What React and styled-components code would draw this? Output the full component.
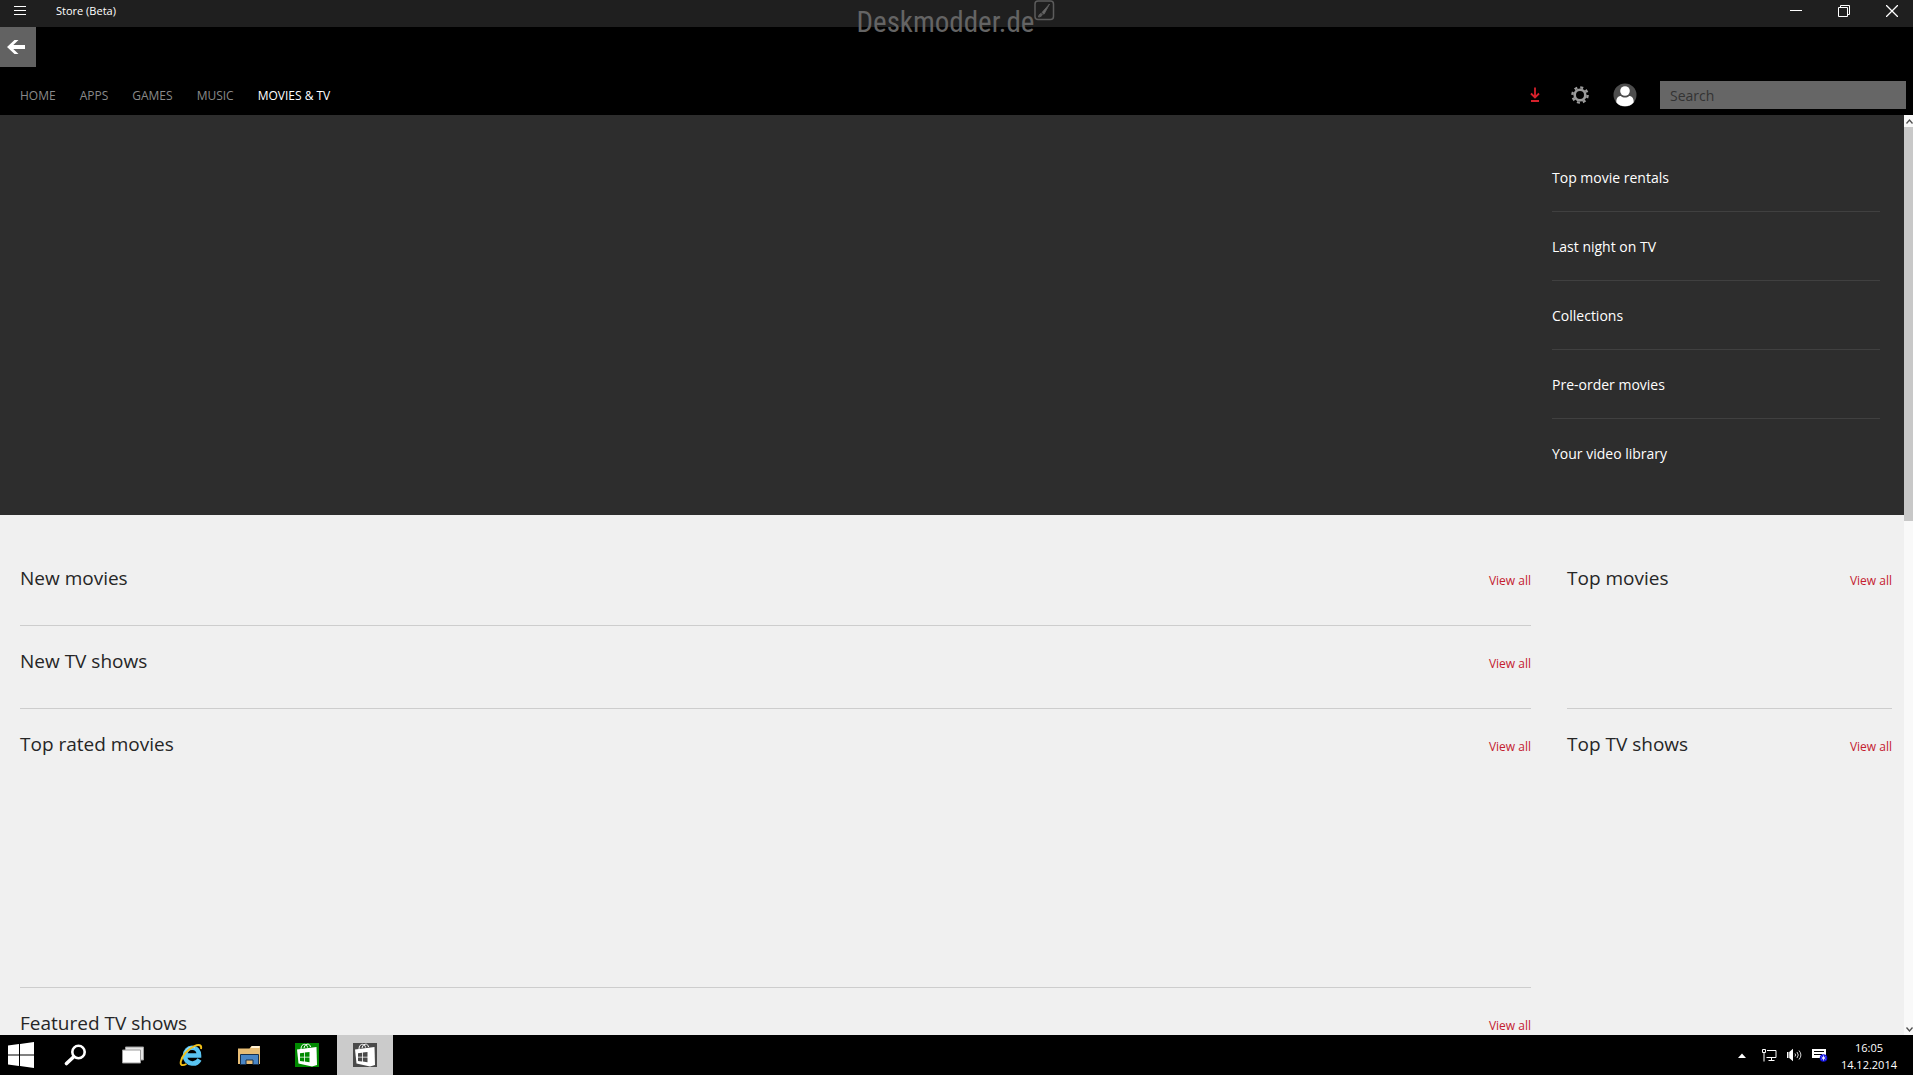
import { useState } from 'react';
import styled, { createGlobalStyle } from 'styled-components';

const tabs = ['HOME', 'APPS', 'GAMES', 'MUSIC', 'MOVIES & TV'];

const links = ['Top movie rentals', 'Last night on TV', 'Collections', 'Pre-order movies', 'Your video library'];

const mainSections = [
  { title: 'New movies', height: 83 },
  { title: 'New TV shows', height: 83 },
  { title: 'Top rated movies', height: 279 },
  { title: 'Featured TV shows', height: 279 },
];

const sideSections = [
  { title: 'Top movies', height: 166 },
  { title: 'Top TV shows', height: 558 },
];

function Section({ title, height }) {
  return (
    <SectionBox $height={height}>
      <h2>{title}</h2>
      <a href="#all">View all</a>
    </SectionBox>
  );
}

function StoreIcon({ color }) {
  return (
    <svg width="24" height="24" viewBox="0 0 24 24">
      <path fill={color} d="M0 0h24v24H0z" />
      <path fill="none" stroke="#fff" d="M6 6C6 0 12 0 12.500 4.500M9 5C10 0 15 0 15.500 4" />
      <path fill="#fff" d="M2 6.500L21.500 4 22 22 17 23.500 3.500 20.500z" />
      <path fill={color} d="M5 10.300l4-.6v4H5zM9.800 9.600l4.700-.7v4.800H9.800zM5 14.500h4v4l-4-.6zM9.800 14.500h4.700v4.800l-4.700-.7z" />
    </svg>
  );
}

export default function App() {
  const [active, setActive] = useState('MOVIES & TV');
  const [query, setQuery] = useState('');

  return (
    <Desktop>
      <GlobalStyle />
      <TitleBar>
        <MenuButton aria-label="Menu">
          <svg width="12" height="10" viewBox="0 0 12 10"><path stroke="#fff" d="M0 .5h12M0 4.500h12M0 8.500h12" /></svg>
        </MenuButton>
        <h1>Store (Beta)</h1>
        <WindowButtons>
          <button aria-label="Minimize">
            <svg width="12" height="12" viewBox="0 0 12 12"><path stroke="#fff" d="M0 5.500h12" /></svg>
          </button>
          <button aria-label="Restore">
            <svg width="12" height="12" viewBox="0 0 12 12"><path fill="none" stroke="#fff" d="M.5 2.500h9v9h-9zM2.500 2.500v-2h9v9h-2" /></svg>
          </button>
          <button aria-label="Close">
            <svg width="12" height="12" viewBox="0 0 12 12"><path stroke="#fff" strokeWidth="1.300" d="M0 0l12 12M12 0L0 12" /></svg>
          </button>
        </WindowButtons>
      </TitleBar>
      <Watermark>
        <span>Deskmodder.de</span>
        <svg width="21" height="21" viewBox="0 0 21 21" fill="none" stroke="#5c5c5c">
          <rect x="1" y="1" width="18.500" height="18.500" rx="3" strokeWidth="1.500" />
          <path fill="#5c5c5c" d="M4.500 17c.3-2 1.200-3.500 2.800-3.500l1 1C8 16 6.500 17 4.500 17z" />
          <path d="M8 12.500L15.500 4 10 14.200z" fill="#6a6a6a" />
        </svg>
      </Watermark>

      <Header>
        <BackButton aria-label="Back">
          <svg width="18" height="16" viewBox="0 0 18 16"><path fill="#fff" d="M0 8L7.500 1h4L6.300 6H18v4H6.300l5.200 5h-4z" /></svg>
        </BackButton>
        <Toolbar>
          <Tabs>
            {tabs.map((tab) => (
              <Tab key={tab} href="#tab" $active={tab === active} onClick={() => setActive(tab)}>{tab}</Tab>
            ))}
          </Tabs>
          <Tools>
            <button aria-label="Downloads">
              <svg width="10" height="16" viewBox="0 0 10 16" fill="none" stroke="#d5212b">
                <path strokeWidth="1.800" d="M5 .5v10M1 6.500l4 4 4-4" />
                <path strokeWidth="2" d="M1 14h8" />
              </svg>
            </button>
            <button aria-label="Settings">
              <svg width="18" height="18" viewBox="0 0 18 18" fill="none" stroke="#9a9a9a">
                <circle cx="9" cy="9" r="5.300" strokeWidth="2.600" />
                <circle cx="9" cy="9" r="7.600" strokeWidth="2.400" strokeDasharray="3 2.969" />
              </svg>
            </button>
            <button aria-label="Account">
              <svg width="24" height="24" viewBox="0 0 24 24">
                <circle cx="12" cy="12" r="11.500" fill="#4d4d4d" />
                <circle cx="12" cy="8" r="4.800" fill="#fff" />
                <path fill="#fff" d="M3.400 19.500C3 15.500 5 13 7.800 13c1.200 1 2.600 1.500 4.200 1.500s3-.5 4.200-1.500c2.800 0 4.800 2.500 4.400 6.500a11.500 11.500 0 0 1-17.200 0z" />
              </svg>
            </button>
          </Tools>
          <Search
            type="text"
            aria-label="Search"
            placeholder="Search"
            value={query}
            onChange={(e) => setQuery(e.target.value)}
          />
        </Toolbar>
      </Header>

      <Viewport>
        <Page>
          <Hero>
            <LinkList>
              {links.map((link) => (
                <li key={link}><a href="#list">{link}</a></li>
              ))}
            </LinkList>
          </Hero>
          <Content>
            <div>
              {mainSections.map((s) => <Section key={s.title} {...s} />)}
            </div>
            <div>
              {sideSections.map((s) => <Section key={s.title} {...s} />)}
            </div>
          </Content>
        </Page>
        <ScrollBar>
          <button aria-label="Scroll up">
            <svg width="7" height="5" viewBox="0 0 7 5"><path fill="none" stroke="#505050" strokeWidth="1.300" d="M.5 4.500l3-3.500 3 3.500" /></svg>
          </button>
          <Thumb />
          <button aria-label="Scroll down">
            <svg width="7" height="5" viewBox="0 0 7 5"><path fill="none" stroke="#505050" strokeWidth="1.300" d="M.5 .5l3 3.500 3-3.500" /></svg>
          </button>
        </ScrollBar>
      </Viewport>

      <Taskbar>
        <StartButton aria-label="Start">
          <svg width="26" height="26" viewBox="0 0 26 26"><path fill="#fff" d="M0 3.500L11 2v10.500H0zM12 1.900L26 0v12.500H12zM0 13.500h11V24L0 22.500zM12 13.500h14V26l-14-1.900z" /></svg>
        </StartButton>
        <TaskButton aria-label="Search Windows">
          <svg width="22" height="22" viewBox="0 0 22 22" fill="none" stroke="#fff">
            <circle cx="14.500" cy="8" r="6.200" strokeWidth="2.600" />
            <path strokeWidth="3.600" strokeLinecap="round" d="M9.500 13l-7 6.500" />
          </svg>
        </TaskButton>
        <TaskButton aria-label="Task view">
          <svg width="22" height="18" viewBox="0 0 22 18" fill="#fff" stroke="#9c9c9c">
            <path d="M3.500 1h18v13h-18z" fill="#e6e6e6" />
            <path d="M.5 4h18v13H.5z" />
          </svg>
        </TaskButton>
        <TaskButton aria-label="Internet Explorer">
          <svg width="24" height="24" viewBox="0 0 24 24">
            <path fill="none" stroke="#59c4f2" strokeWidth="4.600" d="M20.500 16.500C18.500 20 16 20.800 13 20.500 8.500 20 5.800 16.500 6 12.500 6.300 8 9 4.800 13 4.800c4.500 0 7 3.200 7 7.700H8" />
            <path fill="none" stroke="#a8e6ff" strokeWidth="1" d="M6 9c2-4.500 6-6 10-4" />
            <path fill="none" stroke="#f2c019" strokeWidth="1.900" d="M22 6c1-4-2-5-6.500-3C9 6 3 12.500 1.800 18.500c-.8 4 1.700 4.500 5.700 2.500" />
          </svg>
        </TaskButton>
        <TaskButton aria-label="File Explorer">
          <svg width="22" height="20" viewBox="0 0 22 20">
            <path fill="#e8bd75" d="M0 3.500h11.500l2-2.500H22v18H0z" />
            <path fill="#fff1d5" d="M12.500 3l1.500-2h7.500v2z" />
            <path fill="#4a86c5" stroke="#16304d" d="M2.500 19.500v-10h18v10H15v-4.500H8v4.500z" />
          </svg>
        </TaskButton>
        <TaskButton aria-label="Store"><StoreIcon color="#008a00" /></TaskButton>
        <TaskButton aria-label="Store (Beta)" $active><StoreIcon color="#4a4a4a" /></TaskButton>

        <Tray>
          <button aria-label="Show hidden icons">
            <svg width="8" height="5" viewBox="0 0 8 5"><path fill="#fff" d="M0 5l4-4.500L8 5z" /></svg>
          </button>
          <button aria-label="Network">
            <svg width="15" height="14" viewBox="0 0 15 14" fill="none" stroke="#fff">
              <path d="M.5 1.500h3v3h-3zM2 4.500v9M5 2.500h9v7H4.500M9.500 9.500v3M6.500 12.500h6" />
            </svg>
          </button>
          <button aria-label="Volume">
            <svg width="15" height="14" viewBox="0 0 15 14">
              <path fill="#fff" d="M0 4h1.500v6H0zM2.200 4L6 .8v12.400L2.200 10z" />
              <path fill="none" stroke="#d0d0d0" d="M8 5.500q1.200 1.500 0 3M10 4q2.500 3 0 6M12 2.500q3.800 4.500 0 9" />
            </svg>
          </button>
          <button aria-label="Notifications">
            <svg width="16" height="14" viewBox="0 0 16 14">
              <path fill="#fff" d="M0 1h14v9H0z" />
              <path stroke="#000" d="M2 3.500h10M2 6.500h8" />
              <circle cx="11.500" cy="10" r="3.800" fill="#1414e0" />
              <path stroke="#fff" strokeWidth=".8" d="M11.500 7.500v5M9.500 8.800l4 2.400M13.500 8.800l-4 2.400" />
            </svg>
          </button>
          <Clock>
            <time>16:05</time>
            <time>14.12.2014</time>
          </Clock>
        </Tray>
      </Taskbar>
    </Desktop>
  );
}

const GlobalStyle = createGlobalStyle`
  * {
    box-sizing: border-box;
  }

  body {
    margin: 0;
    background: #000;
    font-family: 'Open Sans', 'Noto Sans', sans-serif;
  }

  h1, h2, ul {
    margin: 0;
    padding: 0;
    font-weight: 400;
  }

  a {
    text-decoration: none;
  }

  button {
    display: flex;
    justify-content: center;
    align-items: center;
    padding: 0;
    border: 0;
    background: none;
  }

  svg {
    display: block;
    flex-shrink: 0;
  }
`;

const Desktop = styled.div`
  display: flex;
  flex-direction: column;
  height: 100vh;
  overflow: hidden;
  position: relative;
`;

const TitleBar = styled.div`
  display: flex;
  align-items: center;
  height: 27px;
  padding-bottom: 5px;
  flex-shrink: 0;
  background: #1f1f1f;
  color: #fff;

  & h1 {
    font-size: 11px;
    line-height: 22px;
  }
`;

const MenuButton = styled.button`
  width: 40px;
  height: 22px;
  margin-right: 16px;
`;

const WindowButtons = styled.div`
  display: flex;
  gap: 6px;
  margin-left: auto;

  & button {
    width: 42px;
    height: 22px;
  }
`;

const Watermark = styled.div`
  display: flex;
  position: absolute;
  top: 0;
  left: 50%;
  width: 200px;
  margin-left: -100px;
  color: #646464;
  font-family: 'Roboto Condensed', 'Liberation Sans', sans-serif;
  font-size: 29px;
  line-height: 44px;
  pointer-events: none;
`;

const Header = styled.header`
  height: 88px;
  flex-shrink: 0;
  background: #000;
`;

const BackButton = styled.button`
  && {
    width: 36px;
    height: 40px;
    padding-right: 4px;
    background: #626262;
  }
`;

const Toolbar = styled.div`
  display: flex;
  align-items: center;
  height: 48px;
  padding: 8px 7px 0 20px;
`;

const Tabs = styled.nav`
  display: flex;
  gap: 24px;
  margin-right: auto;
`;

const Tab = styled.a`
  padding-top: 1px;
  color: ${({ $active }) => ($active ? '#fff' : '#8a8a8a')};
  font-size: 12px;
  line-height: 16px;
`;

const Tools = styled.div`
  display: flex;
  margin-right: 13px;

  & button {
    width: 45px;
    height: 28px;
  }
`;

const Search = styled.input`
  width: 246px;
  height: 28px;
  padding: 0 10px;
  border: 0;
  border-radius: 0;
  background: #666;
  color: #fff;
  font-family: inherit;
  font-size: 14px;

  &::placeholder {
    color: #333;
  }
`;

const Viewport = styled.div`
  display: flex;
  flex: 1;
  min-height: 0;
`;

const Page = styled.main`
  flex: 1;
  overflow: hidden;
  background: #f0f0f0;
`;

const Hero = styled.div`
  display: flex;
  justify-content: flex-end;
  height: 400px;
  padding: 28px 24px 0 0;
  background: #2d2d2d;
`;

const LinkList = styled.ul`
  width: 328px;
  list-style: none;

  & li {
    height: 69px;
    border-bottom: 1px solid #404040;
  }

  & li:last-child {
    border-bottom: 0;
  }

  & a {
    display: block;
    color: #fff;
    font-size: 14px;
    line-height: 70px;
  }
`;

const Content = styled.div`
  display: grid;
  grid-template-columns: 1fr 325px;
  gap: 36px;
  padding: 28px 12px 0 20px;
`;

const SectionBox = styled.section`
  display: flex;
  justify-content: space-between;
  align-items: baseline;
  height: ${({ $height }) => $height}px;
  padding-top: 20px;
  border-bottom: 1px solid #cdcdcd;

  & h2 {
    color: #262626;
    font-size: 19px;
    line-height: 30px;
  }

  & a {
    color: #c4202f;
    font-size: 12px;
    line-height: 16px;
  }
`;

const ScrollBar = styled.div`
  display: flex;
  flex-direction: column;
  width: 9px;
  background: #f9f9f9;

  & button {
    height: 12px;
    padding-left: 2px;
  }

  & button:last-child {
    margin-top: auto;
  }
`;

const Thumb = styled.div`
  height: 394px;
  background: #c8c8c8;
`;

const Taskbar = styled.footer`
  display: flex;
  gap: 2px;
  height: 40px;
  flex-shrink: 0;
  background: #000;
`;

const TaskButton = styled.button`
  && {
    width: 56px;
    height: 40px;
    background: ${({ $active }) => ($active ? '#cbcbcb' : 'none')};
  }
`;

const StartButton = styled.button`
  && {
    width: 45px;
    height: 40px;
    padding-right: 3px;
  }
`;

const Tray = styled.div`
  display: flex;
  align-items: center;
  gap: 10px;
  margin-left: auto;
  padding-right: 16px;

  & button:first-child {
    margin-right: 6px;
  }
`;

const Clock = styled.div`
  display: flex;
  flex-direction: column;
  align-items: center;
  margin-left: 3px;
  padding-top: 2px;
  color: #fff;
  font-size: 11px;
  line-height: 17px;
`;
